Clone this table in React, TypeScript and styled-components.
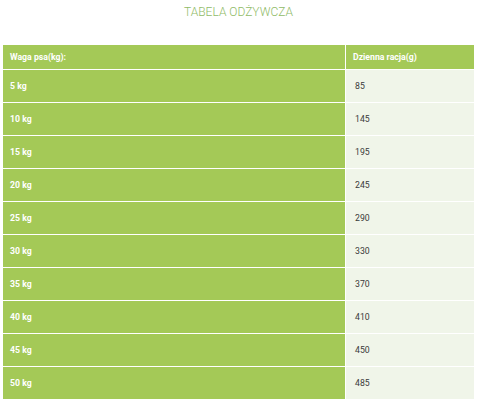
import React from "react";
import styled, { createGlobalStyle } from "styled-components";

const GlobalStyle = createGlobalStyle`
  html, body {
    margin: 0;
    padding: 0;
    background: #ffffff;
    font-family: Roboto, "Liberation Sans", sans-serif;
  }
`;

const Page = styled.div`
  width: 480px;
  height: 406px;
  padding: 5px 6px 0 3px;
  box-sizing: border-box;
  overflow: hidden;
`;

const Title = styled.h2`
  margin: 0;
  height: 40px;
  text-align: center;
  font-size: 12px;
  font-weight: 300;
  color: #90bb68;
  line-height: 14px;
`;

const Table = styled.div`
  display: grid;
  grid-template-columns: 342px 128px;
  grid-template-rows: 24px;
  grid-auto-rows: 32px;
  column-gap: 1px;
  row-gap: 1px;
`;

const Cell = styled.div<{ $tone: "green" | "light" }>`
  display: flex;
  align-items: center;
  font-size: 8.7px;
  background: ${(p) => (p.$tone === "green" ? "#a4c957" : "#f0f5e9")};
  color: ${(p) => (p.$tone === "green" ? "#ffffff" : "#3a3a3a")};
  font-weight: ${(p) => (p.$tone === "green" ? 700 : 400)};
  padding-left: ${(p) => (p.$tone === "green" ? "7px" : "9px")};
`;

const HeadCell = styled(Cell)`
  padding-left: 7px;
  font-weight: 700;
  color: #ffffff;
  background: #a4c957;
`;

const rows = [
  ["5 kg", "85"],
  ["10 kg", "145"],
  ["15 kg", "195"],
  ["20 kg", "245"],
  ["25 kg", "290"],
  ["30 kg", "330"],
  ["35 kg", "370"],
  ["40 kg", "410"],
  ["45 kg", "450"],
  ["50 kg", "485"],
];

export default function App() {
  return (
    <>
      <GlobalStyle />
      <Page>
        <Title>TABELA ODŻYWCZA</Title>
        <Table>
          <HeadCell $tone="green">Waga psa(kg):</HeadCell>
          <HeadCell $tone="green">Dzienna racja(g)</HeadCell>
          {rows.map(([w, g]) => (
            <React.Fragment key={w}>
              <Cell $tone="green">{w}</Cell>
              <Cell $tone="light">{g}</Cell>
            </React.Fragment>
          ))}
        </Table>
      </Page>
    </>
  );
}
